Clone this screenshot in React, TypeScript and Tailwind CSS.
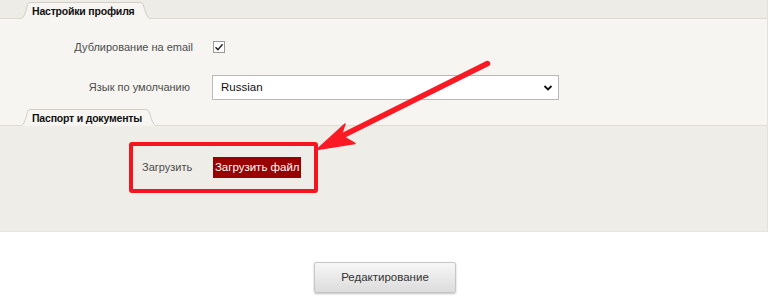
import React from "react";

function Tab({ title, width }: { title: string; width: number }) {
  const w = width;
  const h = 17;
  return (
    <div className="relative ml-[20px] h-[17px]" style={{ width: w }}>
      <svg className="absolute left-0 top-0" width={w} height={h} viewBox={`0 0 ${w} ${h}`}>
        <path
          d={`M0 17.5 C4 16.5 6 9 7.5 2.5 Q8.2 0.5 10.5 0.5 L${w - 11} 0.5 Q${w - 8.5} 0.5 ${w - 7.8} 2.5 C${w - 6} 9 ${w - 4} 16.5 ${w} 17.5`}
          fill="#f6f5f2"
          stroke="#d3cfc4"
          strokeWidth="1"
        />
      </svg>
      <span className="relative block whitespace-nowrap pl-[12px] pt-[2px] text-[10.5px] font-bold leading-[14px] tracking-[-0.2px] text-[#111]">
        {title}
      </span>
    </div>
  );
}

export default function App() {
  return (
    <div
      className="relative h-[301px] w-[770px] overflow-hidden bg-white"
      style={{ fontFamily: '"Liberation Sans", Arial, sans-serif' }}
    >
      <div className="w-[768px] border-r border-[#e4e1d9]">
        {/* Section 1 header */}
        <div className="relative flex h-[19px] items-end bg-[#eeece7] pt-[2px]">
          <div className="absolute bottom-0 left-0 right-0 h-px bg-[#dedad0]" />
          <Tab title="Настройки профиля" width={131} />
        </div>
        {/* Section 1 content */}
        <div className="bg-[#f6f5f2] pb-[7px] pt-[20px]">
          <div className="flex h-[16px] items-center">
            <div className="w-[193px] text-right text-[11px] text-[#4d4d4d]">Дублирование на email</div>
            <div className="ml-[20px] flex h-[12px] w-[12px] items-center justify-center border border-[#9a9a9a] bg-white">
              <svg width="10" height="10" viewBox="0 0 10 10">
                <path d="M1.5 5.2 L3.9 7.6 L8.6 2.2" fill="none" stroke="#222" strokeWidth="1.4" />
              </svg>
            </div>
          </div>
          <div className="mt-[20px] flex items-center">
            <div className="w-[190px] text-right text-[11px] text-[#4d4d4d]">Язык по умолчанию</div>
            <div className="ml-[22px] flex h-[25px] w-[347px] items-center justify-between border border-[#b9b9b9] bg-white pl-[8px] pr-[5px]">
              <span className="text-[11.5px] text-[#111]">Russian</span>
              <svg width="10" height="8" viewBox="0 0 10 8">
                <path d="M1.5 2 L5 5.5 L8.5 2" fill="none" stroke="#111" strokeWidth="1.8" />
              </svg>
            </div>
          </div>
        </div>
        {/* Section 2 header */}
        <div className="relative flex h-[19px] items-end bg-[#f6f5f2] pt-[1px]">
          <div className="absolute bottom-0 left-0 right-0 h-px bg-[#e0dcd3]" />
          <Tab title="Паспорт и документы" width={137} />
        </div>
        {/* Section 2 content */}
        <div className="h-[106px] border-b border-[#e8e5de] bg-[#efede8] pt-[16px]">
          <div className="ml-[129px] flex h-[51px] w-[189px] items-center rounded-[3px] border-[4px] border-[#f5151e] pl-[9px]">
            <span className="text-[11px] text-[#4d4d4d]">Загрузить</span>
            <button className="ml-[21px] flex h-[21px] w-[88px] items-center justify-center whitespace-nowrap bg-[#990000] text-[11.5px] text-white">
              Загрузить файл
            </button>
          </div>
        </div>
      </div>

      <div className="flex justify-center pt-[30px]">
        <button className="h-[31px] w-[142px] rounded-[2px] border border-[#c6c6c6] bg-gradient-to-b from-[#f7f7f7] to-[#dcdcdc] text-[11.5px] text-[#333] shadow-[0_1px_2px_rgba(0,0,0,0.25)]">
          Редактирование
        </button>
      </div>

      {/* annotation arrow */}
      <svg className="pointer-events-none absolute left-0 top-0" width="770" height="301" viewBox="0 0 770 301">
        <line x1="487.5" y1="63.5" x2="336" y2="139" stroke="#fb1a24" strokeWidth="5.5" strokeLinecap="round" />
        <polygon points="317,149.5 345,124 341,135.5 355,143.5" fill="#fb1a24" stroke="#fb1a24" strokeWidth="1.5" strokeLinejoin="round" />
      </svg>
    </div>
  );
}
